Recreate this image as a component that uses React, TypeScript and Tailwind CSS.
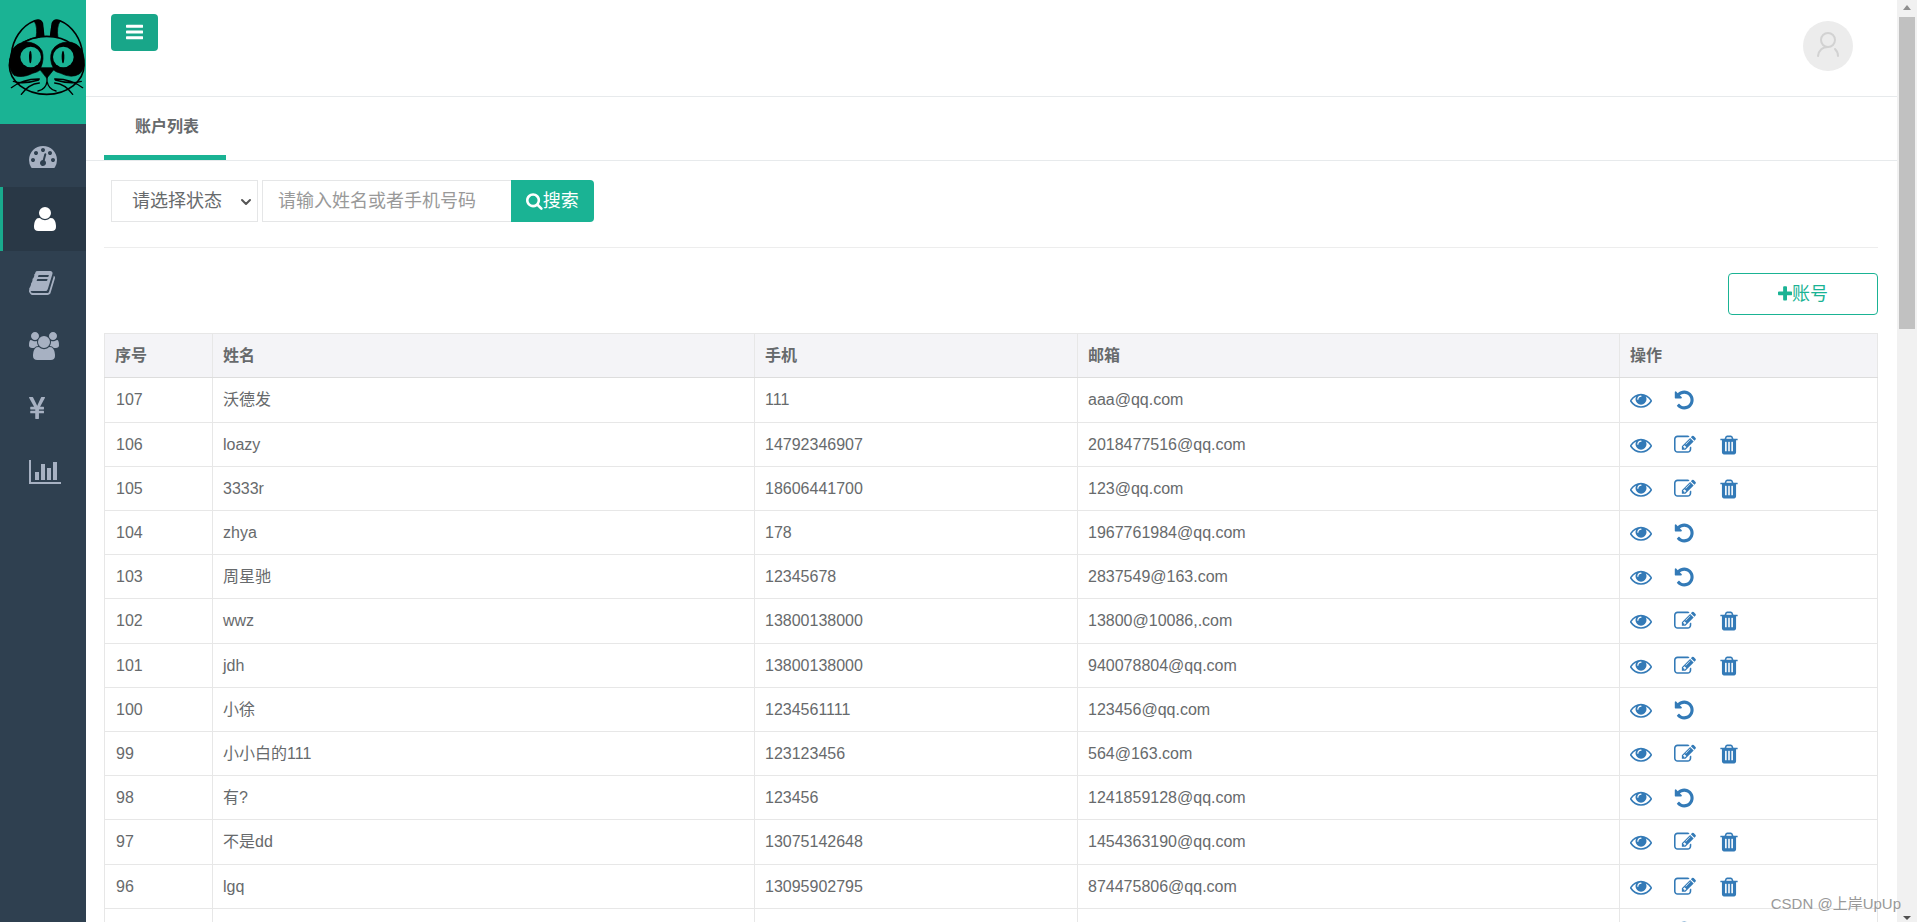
import { ChevronDown } from "lucide-react";

const icons = {
  bars: {
    box: "128 0 1536 1792",
    d: "M1664 1344v128q0 26-19 45t-45 19h-1408q-26 0-45-19t-19-45v-128q0-26 19-45t45-19h1408q26 0 45 19t19 45zm0-512v128q0 26-19 45t-45 19h-1408q-26 0-45-19t-19-45v-128q0-26 19-45t45-19h1408q26 0 45 19t19 45zm0-512v128q0 26-19 45t-45 19h-1408q-26 0-45-19t-19-45v-128q0-26 19-45t45-19h1408q26 0 45 19t19 45z",
  },
  dashboard: {
    box: "0 0 1792 1792",
    d: "M384 1152q0-53-37.5-90.5t-90.5-37.5-90.5 37.5-37.5 90.5 37.5 90.5 90.5 37.5 90.5-37.5 37.5-90.5zm192-448q0-53-37.5-90.5t-90.5-37.5-90.5 37.5-37.5 90.5 37.5 90.5 90.5 37.5 90.5-37.5 37.5-90.5zm428 481l101-382q6-26-7.5-48.5t-38.5-29.5-48 6.5-30 39.5l-101 382q-60 5-107 43.5t-63 98.5q-20 77 20 146t117 89 146-20 89-117q16-60-6-117t-72-91zm660-33q0-53-37.5-90.5t-90.5-37.5-90.5 37.5-37.5 90.5 37.5 90.5 90.5 37.5 90.5-37.5 37.5-90.5zm-640-640q0-53-37.5-90.5t-90.5-37.5-90.5 37.5-37.5 90.5 37.5 90.5 90.5 37.5 90.5-37.5 37.5-90.5zm448 192q0-53-37.5-90.5t-90.5-37.5-90.5 37.5-37.5 90.5 37.5 90.5 90.5 37.5 90.5-37.5 37.5-90.5zm320 448q0 261-141 483-19 29-54 29h-1402q-35 0-54-29-141-221-141-483 0-182 71-348t191-286 286-191 348-71 348 71 286 191 191 286 71 348z",
  },
  user: {
    box: "0 0 1792 1792",
    d: "M1600 1405q0 120-73 189.5t-194 69.5h-874q-121 0-194-69.5t-73-189.5q0-53 3.5-103.5t14-109 26.5-108.5 43-97.5 62-81 85.5-53.5 111.5-20q9 0 42 21.5t74.5 48 108 48 133.5 21.5 133.5-21.5 108-48 74.5-48 42-21.5q61 0 111.5 20t85.5 53.5 62 81 43 97.5 26.5 108.5 14 109 3.5 103.5zm-320-893q0 159-112.5 271.5t-271.5 112.5-271.5-112.5-112.5-271.5 112.5-271.5 271.5-112.5 271.5 112.5 112.5 271.5z",
  },
  book: {
    box: "64 0 1664 1792",
    d: "M1703 478q40 57 18 129l-275 906q-19 64-76.5 107.5t-122.5 43.5h-923q-77 0-148.5-53.5t-99.5-131.5q-24-67-2-127 0-4 3-27t4-37q1-8-3-21.5t-3-19.5q2-11 8-21t16.5-23.5 16.5-23.5q23-38 45-91.5t30-91.5q3-10 .5-30t-.5-28q3-11 17-28t17-23q21-36 42-92t25-90q1-9-2.5-32t.5-28q4-13 22-30.5t22-22.5q19-26 42.5-84.5t27.5-96.5q1-8-3-25.5t-2-26.5q2-8 9-18t18-23 17-21q8-12 16.5-30.5t15-35 16-36 19.5-32 26.5-23.5 36-11.5 47.5 5.5l-1 3q38-9 51-9h761q74 0 114 56t18 130l-274 906q-36 119-71.5 153.5t-128.5 34.5h-869q-27 0-38 15-11 16-1 43 24 70 144 70h923q29 0 56-15.5t35-41.5l300-987q7-22 5-57 38 15 59 43zm-1064 2q-4 13 2 22.5t20 9.5h608q13 0 25.5-9.5t16.5-22.5l21-64q4-13-2-22.5t-20-9.5h-608q-13 0-25.5 9.5t-16.5 22.5zm-83 256q-4 13 2 22.5t20 9.5h608q13 0 25.5-9.5t16.5-22.5l21-64q4-13-2-22.5t-20-9.5h-608q-13 0-25.5 9.5t-16.5 22.5z",
  },
  users: {
    box: "0 0 1920 1792",
    d: "M593 896q-162 5-265 128h-134q-82 0-138-40.5t-56-118.5q0-353 124-353 6 0 43.5 21t97.5 42.5 119 21.5q67 0 133-23-5 37-5 66 0 139 81 256zm1071 637q0 120-73 189.5t-194 69.5h-874q-121 0-194-69.5t-73-189.5q0-53 3.5-103.5t14-109 26.5-108.5 43-97.5 62-81 85.5-53.5 111.5-20q10 0 43 21.5t73 48 107 48 135 21.5 135-21.5 107-48 73-48 43-21.5q61 0 111.5 20t85.5 53.5 62 81 43 97.5 26.5 108.5 14 109 3.5 103.5zm-1024-1277q0 106-75 181t-181 75-181-75-75-181 75-181 181-75 181 75 75 181zm704 384q0 159-112.5 271.5t-271.5 112.5-271.5-112.5-112.5-271.5 112.5-271.5 271.5-112.5 271.5 112.5 112.5 271.5zm576 225q0 78-56 118.5t-138 40.5h-134q-103-123-265-128 81-117 81-256 0-29-5-66 66 23 133 23 59 0 119-21.5t97.5-42.5 43.5-21q124 0 124 353zm-128-609q0 106-75 181t-181 75-181-75-75-181 75-181 181-75 181 75 75 181z",
  },
  yen: {
    box: "382 0 1027 1792",
    d: "M985.5 1536h-172q-13 0-22.5-9t-9.5-23v-330h-288q-13 0-22.5-9t-9.5-23v-103q0-13 9.5-22.5t22.5-9.5h288v-85h-288q-13 0-22.5-9t-9.5-23v-104q0-13 9.5-22.5t22.5-9.5h214l-321-578q-8-16 0-32 10-16 28-16h194q19 0 29 18l215 425q19 38 56 125 10-24 30.5-68t27.5-61l191-420q8-19 29-19h191q17 0 27 16 9 14 1 31l-313 579h215q13 0 22.5 9.5t9.5 22.5v104q0 14-9.5 23t-22.5 9h-290v85h290q13 0 22.5 9.5t9.5 22.5v103q0 14-9.5 23t-22.5 9h-290v330q0 13-9.5 22.5t-22.5 9.5z",
  },
  chart: {
    box: "0 0 2048 1792",
    d: "M640 896v512h-256v-512h256zm384-512v1024h-256v-1024h256zm1024 1152v128h-2048v-1536h128v1408h1920zm-640-896v768h-256v-768h256zm384-384v1152h-256v-1152h256z",
  },
  search: {
    box: "64 0 1664 1792",
    d: "M1216 832q0-185-131.5-316.5t-316.5-131.5-316.5 131.5-131.5 316.5 131.5 316.5 316.5 131.5 316.5-131.5 131.5-316.5zm512 832q0 52-38 90t-90 38q-54 0-90-38l-343-342q-179 124-399 124-143 0-273.5-55.5t-225-150-150-225-55.5-273.5 55.5-273.5 150-225 225-150 273.5-55.5 273.5 55.5 225 150 150 225 55.5 273.5q0 220-124 399l343 343q37 37 37 90z",
  },
  plus: {
    box: "192 0 1408 1792",
    d: "M1600 736v192q0 40-28 68t-68 28h-416v416q0 40-28 68t-68 28h-192q-40 0-68-28t-28-68v-416h-416q-40 0-68-28t-28-68v-192q0-40 28-68t68-28h416v-416q0-40 28-68t68-28h192q40 0 68 28t28 68v416h416q40 0 68 28t28 68z",
  },
  eye: {
    box: "0 0 1792 1792",
    d: "M1664 960q-152-236-381-353 61 104 61 225 0 185-131.5 316.5t-316.5 131.5-316.5-131.5-131.5-316.5q0-121 61-225-229 117-381 353 133 205 333.5 326.5t434.5 121.5 434.5-121.5 333.5-326.5zm-720-384q0-20-14-34t-34-14q-125 0-214.5 89.5t-89.5 214.5q0 20 14 34t34 14 34-14 14-34q0-86 61-147t147-61q20 0 34-14t14-34zm848 384q0 34-20 69-140 230-376.5 368.5t-499.5 138.5-499.5-139-376.5-368q-20-35-20-69t20-69q140-229 376.5-368t499.5-139 499.5 139 376.5 368q20 35 20 69z",
  },
  edit: {
    box: "0 0 1792 1792",
    d: "M888 1184l116-116-152-152-116 116v56h96v96h56zm440-720q-16-16-33 1l-350 350q-17 17-1 33t33-1l350-350q17-17 1-33zm80 594v190q0 119-84.5 203.5t-203.5 84.5h-832q-119 0-203.5-84.5t-84.5-203.5v-832q0-119 84.5-203.5t203.5-84.5h832q63 0 117 25 15 7 18 23 3 17-9 29l-49 49q-14 14-32 8-23-6-45-6h-832q-66 0-113 47t-47 113v832q0 66 47 113t113 47h832q66 0 113-47t47-113v-126q0-13 9-22l64-64q15-15 35-7t20 29zm-96-738l288 288-672 672h-288v-288zm444 132l-92 92-288-288 92-92q28-28 68-28t68 28l152 152q28 28 28 68t-28 68z",
  },
  trash: {
    box: "0 0 1792 1792",
    d: "M704 1376v-704q0-14-9-23t-23-9h-64q-14 0-23 9t-9 23v704q0 14 9 23t23 9h64q14 0 23-9t9-23zm256 0v-704q0-14-9-23t-23-9h-64q-14 0-23 9t-9 23v704q0 14 9 23t23 9h64q14 0 23-9t9-23zm256 0v-704q0-14-9-23t-23-9h-64q-14 0-23 9t-9 23v704q0 14 9 23t23 9h64q14 0 23-9t9-23zm-544-992h448l-48-117q-7-9-17-11h-317q-10 2-17 11zm928 32v64q0 14-9 23t-23 9h-96v948q0 83-47 143.5t-113 60.5h-832q-66 0-113-58.5t-47-141.5v-952h-96q-14 0-23-9t-9-23v-64q0-14 9-23t23-9h309l70-167q15-37 54-63t79-26h320q40 0 79 26t54 63l70 167h309q14 0 23 9t9 23z",
  },
  undo: {
    box: "64 0 1664 1792",
    d: "M1664 896q0 156-61 298t-164 245-245 164-298 61q-172 0-327-72.5t-264-204.5q-7-10-6.5-22.5t8.5-20.5l137-138q10-9 25-9 16 2 23 12 73 95 179 147t225 52q104 0 198.5-40.5t163.5-109.5 109.5-163.5 40.5-198.5-40.5-198.5-109.5-163.5-163.5-109.5-198.5-40.5q-98 0-188 35.5t-160 101.5l137 138q31 30 14 69-17 40-59 40h-448q-26 0-45-19t-19-45v-448q0-42 40-59 39-17 69 14l130 129q107-101 244.5-156.5t284.5-55.5q156 0 298 61t245 164 164 245 61 298z",
  },
};

type IconName = keyof typeof icons;

function Icon({ name, className }: { name: IconName; className: string }) {
  return (
    <svg viewBox={icons[name].box} className={className} fill="currentColor" aria-hidden="true">
      <path d={icons[name].d} />
    </svg>
  );
}

const menu: { icon: IconName; label: string; active?: boolean }[] = [
  { icon: "dashboard", label: "控制台" },
  { icon: "user", label: "账户", active: true },
  { icon: "book", label: "课程" },
  { icon: "users", label: "用户" },
  { icon: "yen", label: "财务" },
  { icon: "chart", label: "统计" },
];

const accounts = [
  { id: "107", name: "沃德发", phone: "111", email: "aaa@qq.com", removed: true },
  { id: "106", name: "loazy", phone: "14792346907", email: "2018477516@qq.com", removed: false },
  { id: "105", name: "3333r", phone: "18606441700", email: "123@qq.com", removed: false },
  { id: "104", name: "zhya", phone: "178", email: "1967761984@qq.com", removed: true },
  { id: "103", name: "周星驰", phone: "12345678", email: "2837549@163.com", removed: true },
  { id: "102", name: "wwz", phone: "13800138000", email: "13800@10086,.com", removed: false },
  { id: "101", name: "jdh", phone: "13800138000", email: "940078804@qq.com", removed: false },
  { id: "100", name: "小徐", phone: "1234561111", email: "123456@qq.com", removed: true },
  { id: "99", name: "小小白的111", phone: "123123456", email: "564@163.com", removed: false },
  { id: "98", name: "有?", phone: "123456", email: "1241859128@qq.com", removed: true },
  { id: "97", name: "不是dd", phone: "13075142648", email: "1454363190@qq.com", removed: false },
  { id: "96", name: "lgq", phone: "13095902795", email: "874475806@qq.com", removed: false },
  { id: "", name: "", phone: "", email: "", removed: true },
];

function CatLogo() {
  return (
    <svg viewBox="0 0 258 285" className="w-full" fill="none" stroke="#000" strokeWidth="5" strokeLinecap="round">
      <ellipse cx="140" cy="166" rx="112" ry="87" />
      {/* ears */}
      <path d="M35 128C38 92 62 48 104 32Q122 26 127 40L131 78" />
      <path d="M247 128C244 92 220 48 180 32Q162 26 157 40L152 78" />
      <path d="M103 34Q118 26 124 37Q130 52 131 78L108 83Q114 52 103 34Z" fill="#000" strokeWidth="2" />
      <path d="M180 34Q165 26 159 37Q153 52 152 78L174 83Q169 52 180 34Z" fill="#000" strokeWidth="2" />
      {/* mask */}
      <path d="M29 150Q32 106 68 97Q108 92 126 122Q134 146 122 174L140 196L160 174Q146 148 156 122Q174 92 214 97Q250 106 253 150Q254 180 238 192Q214 206 182 190Q166 186 158 178L140 202L122 178Q116 186 98 190Q66 206 42 196Q26 180 29 150Z" fill="#000" strokeWidth="2" />
      <path d="M116 173H166L141 204Z" fill="#000" strokeWidth="2" />
      <path d="M68 96Q96 82 118 82" strokeWidth="3" />
      {/* eyes */}
      <circle cx="92" cy="141" r="31" fill="#1ab394" stroke="none" />
      <circle cx="190" cy="141" r="31" fill="#1ab394" stroke="none" />
      <ellipse cx="91" cy="141" rx="4" ry="19" fill="#000" stroke="none" />
      <ellipse cx="189" cy="141" rx="4" ry="19" fill="#000" stroke="none" />
      {/* mouth and whiskers */}
      <path d="M141 200V214Q138 238 114 243M141 214Q146 238 168 243" strokeWidth="4" />
      <path d="M34 233Q70 206 118 207M64 253Q86 222 118 219M40 214Q70 224 116 210" strokeWidth="4" />
      <path d="M248 233Q212 206 164 207M218 253Q196 222 164 219M244 214Q212 224 166 210" strokeWidth="4" />
    </svg>
  );
}

function Sidebar() {
  return (
    <aside className="w-[86px] shrink-0 bg-[#2f4050]">
      <div className="h-[124px] bg-[#1ab394] pt-[10px]">
        <CatLogo />
      </div>
      <nav>
        {menu.map((item) => (
          <a
            key={item.label}
            href="#"
            aria-label={item.label}
            className={
              item.active
                ? "flex h-16 items-center border-l-[3px] border-[#19aa8d] bg-[#293846] pl-7 text-white"
                : "flex h-[63px] items-center pl-[29px] text-[#a7b1c2]"
            }
          >
            <Icon name={item.icon} className="h-7" />
          </a>
        ))}
      </nav>
    </aside>
  );
}

function Header() {
  return (
    <header className="flex h-[97px] shrink-0 items-start justify-between border-b border-[#e7eaec] pl-[25px] pr-11">
      <button
        aria-label="菜单"
        className="mt-[14px] flex h-[37px] w-[47px] items-center justify-center rounded bg-[#18a689] pb-[2px] text-white"
      >
        <Icon name="bars" className="h-5" />
      </button>
      <div className="mt-[21px] flex size-[50px] items-center justify-center rounded-full bg-[#ececec]">
        <svg viewBox="0 0 50 50" className="size-full" fill="none" stroke="#d2d2d2" strokeWidth="2" strokeLinecap="round">
          <circle cx="25" cy="19" r="7" />
          <path d="M15 35C16 29 20 26 25 26M32 28Q35 31 35 35" />
        </svg>
      </div>
    </header>
  );
}

function Filters() {
  return (
    <form className="flex gap-1 border-b border-[#ededed] pb-[25px] pl-[7px] text-lg">
      <div className="relative">
        <select
          aria-label="状态"
          className="h-[42px] w-[147px] appearance-none border border-[#e5e6e7] bg-white pl-5 text-[#676a6c]"
        >
          <option>请选择状态</option>
        </select>
        <ChevronDown className="pointer-events-none absolute right-1 top-[14px] size-4 text-[#555]" strokeWidth={3} />
      </div>
      <div className="flex">
        <input
          type="text"
          aria-label="姓名或者手机号码"
          placeholder="请输入姓名或者手机号码"
          className="h-[42px] w-[249px] border border-r-0 border-[#e5e6e7] px-[15px] placeholder:text-[#999]"
        />
        <button type="button" className="flex h-[42px] w-[83px] items-center justify-center rounded-r bg-[#1ab394] text-white">
          <Icon name="search" className="h-[18px]" />
          搜索
        </button>
      </div>
    </form>
  );
}

function AccountTable() {
  return (
    <table className="mt-[18px] w-full table-fixed border-collapse text-left text-base leading-5">
      <colgroup>
        <col className="w-[108px]" />
        <col className="w-[542px]" />
        <col className="w-[323px]" />
        <col className="w-[542px]" />
        <col className="w-[258px]" />
      </colgroup>
      <thead>
        <tr className="h-11 bg-[#f4f4f7]">
          {["序号", "姓名", "手机", "邮箱", "操作"].map((title) => (
            <th key={title} className="border border-b-[#ddd] border-[#e7e7e7] px-[10px] py-0 font-bold">
              {title}
            </th>
          ))}
        </tr>
      </thead>
      <tbody>
        {accounts.map((row, index) => (
          <tr key={index} className="h-11 nth-[5n+1]:h-[45px]">
            <td className="border border-[#e7e7e7] px-[11px] py-0">{row.id}</td>
            <td className="border border-[#e7e7e7] px-[10px] py-0">{row.name}</td>
            <td className="border border-[#e7e7e7] px-[10px] py-0">{row.phone}</td>
            <td className="border border-[#e7e7e7] px-[10px] py-0">{row.email}</td>
            <td className="border border-[#e7e7e7] px-[10px] py-0">
              <div className="flex gap-[22px] text-[#337ab7]">
                <a href="#" aria-label="查看">
                  <Icon name="eye" className="h-[22px]" />
                </a>
                {row.removed ? (
                  <a href="#" aria-label="恢复">
                    <Icon name="undo" className="h-[22px]" />
                  </a>
                ) : (
                  <>
                    <a href="#" aria-label="编辑">
                      <Icon name="edit" className="h-[22px]" />
                    </a>
                    <a href="#" aria-label="删除">
                      <Icon name="trash" className="h-[22px]" />
                    </a>
                  </>
                )}
              </div>
            </td>
          </tr>
        ))}
      </tbody>
    </table>
  );
}

function Scrollbar() {
  return (
    <div className="flex w-5 shrink-0 flex-col items-center bg-[#f1f1f1]">
      <svg viewBox="0 0 20 17" className="h-[17px] w-5" fill="#8f8f8f">
        <path d="M6 10L10 5L14 10Z" />
      </svg>
      <div className="h-[312px] w-4 bg-[#c1c1c1]" />
      <svg viewBox="0 0 20 17" className="mt-auto h-[17px] w-5" fill="#505050">
        <path d="M6 11L10 15L14 11Z" />
      </svg>
    </div>
  );
}

export default function App() {
  return (
    <div className="relative flex h-screen overflow-hidden bg-white font-['Liberation_Sans','Noto_Sans_CJK_SC',sans-serif] text-[#676a6c]">
      <Sidebar />
      <main className="flex min-w-0 flex-1 flex-col overflow-hidden">
        <Header />
        <div className="flex h-16 shrink-0 border-b border-[#e7eaec] pl-[18px]">
          <a href="#" className="flex items-center border-b-[5px] border-[#1ab394] pl-[31px] pr-[27px] pt-[2px] text-base font-bold">
            账户列表
          </a>
        </div>
        <div className="pl-[18px] pr-[19px] pt-[19px]">
          <Filters />
          <div className="mt-[25px] flex justify-end">
            <button className="flex h-[42px] w-[150px] items-center justify-center rounded border border-[#1ab394] text-lg text-[#1ab394]">
              <Icon name="plus" className="h-[18px]" />
              账号
            </button>
          </div>
          <AccountTable />
        </div>
      </main>
      <Scrollbar />
      <p className="absolute bottom-2 right-4 text-[15px] leading-5 text-[#999]">CSDN @上岸UpUp</p>
    </div>
  );
}
